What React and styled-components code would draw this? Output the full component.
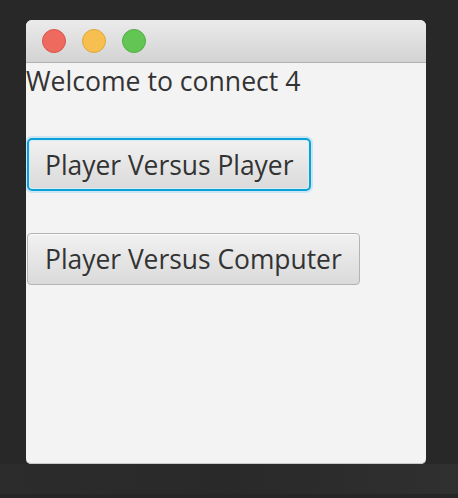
import styled, { createGlobalStyle } from "styled-components";

const Global = createGlobalStyle`
  html, body {
    margin: 0;
    padding: 0;
    background: #292929;
  }
  body {
    font-family: "Open Sans", "Liberation Sans", sans-serif;
  }
`;

const Screen = styled.div`
  width: 458px;
  height: 498px;
  display: flex;
  flex-direction: column;
  overflow: hidden;
`;

const Desk = styled.div`
  height: 464px;
  padding: 20px 0 0 26px;
  box-sizing: border-box;
  background: #282828;
`;

const Dock = styled.div`
  height: 30px;
  background: linear-gradient(90deg, #2c2c2c, #292929 50%, #303030);
  border-bottom: 4px solid #262626;
`;

const Window = styled.div`
  width: 400px;
  height: 444px;
  background: #f3f3f3;
  border-radius: 6px 6px 5px 5px;
  overflow: hidden;
  display: flex;
  flex-direction: column;
  box-shadow: inset 0 -1px 0 #c8c8c8;
`;

const TitleBar = styled.div`
  height: 42px;
  flex-shrink: 0;
  display: flex;
  align-items: center;
  gap: 16px;
  padding: 0 0 0 16px;
  background: linear-gradient(#ebebeb, #d3d3d3);
  border-bottom: 1px solid #b1b1b1;
`;

const Light = styled.span`
  width: 22px;
  height: 22px;
  border-radius: 50%;
  background: ${({ $c }) => $c};
  border: 1px solid ${({ $b }) => $b};
`;

const Content = styled.div`
  display: flex;
  flex-direction: column;
  align-items: flex-start;
  color: #333;
`;

const Heading = styled.div`
  font-size: 26.6px;
  line-height: 34px;
  margin-top: 1px;
`;

const Button = styled.button`
  font-family: inherit;
  font-size: 26.4px;
  color: #333;
  height: ${({ $focus }) => ($focus ? "53px" : "52px")};
  padding: 0 ${({ $focus }) => ($focus ? "16px" : "17px")};
  margin-left: 1px;
  margin-top: ${({ $top }) => $top}px;
  border-radius: ${({ $focus }) => ($focus ? "5px" : "4px")};
  border: ${({ $focus }) => ($focus ? "2px solid #0aa0d8" : "1px solid #b3b3b3")};
  background: linear-gradient(#f1f1f1, #dadada);
  box-shadow: ${({ $focus }) =>
    $focus ? "0 0 0 2px #cbe6f2, inset 0 0 0 1px #d8ecf4" : "inset 0 1px 0 #fafafa"};
  cursor: pointer;
`;

export default function App() {
  return (
    <Screen>
      <Global />
      <Desk>
        <Window>
          <TitleBar>
            <Light $c="#ee6a5f" $b="#d9544a" />
            <Light $c="#f6bf50" $b="#dea73c" />
            <Light $c="#62c554" $b="#4fae44" />
          </TitleBar>
          <Content>
            <Heading>Welcome to connect 4</Heading>
            <Button $focus $top={40}>Player Versus Player</Button>
            <Button $top={42}>Player Versus Computer</Button>
          </Content>
        </Window>
      </Desk>
      <Dock />
    </Screen>
  );
}
